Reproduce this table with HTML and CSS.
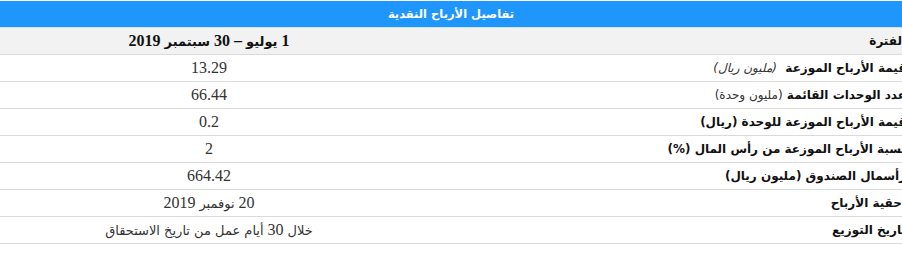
FILE: index.html
```html
<!DOCTYPE html>
<html lang="ar" dir="rtl">
<head>
<meta charset="utf-8">
<link rel="stylesheet" href="styles.css">
</head>
<body>
<div class="panel">
  <div class="title">تفاصيل الأرباح النقدية</div>
  <div class="clip">
    <table class="grid">
      <tr class="head">
        <th class="label">الفترة</th>
        <th class="value">1 <span class="ar">يوليو</span> – 30 <span class="ar">سبتمبر</span> 2019</th>
      </tr>
      <tr>
        <td class="label">قيمة الأرباح الموزعة&nbsp; <span class="unit-it">(مليون ريال)</span></td>
        <td class="value">13.29</td>
      </tr>
      <tr>
        <td class="label">عدد الوحدات القائمة <span class="unit">(مليون وحدة)</span></td>
        <td class="value">66.44</td>
      </tr>
      <tr>
        <td class="label">قيمة الأرباح الموزعة للوحدة (ريال)</td>
        <td class="value">0.2</td>
      </tr>
      <tr>
        <td class="label">نسبة الأرباح الموزعة من رأس المال (%)</td>
        <td class="value">2</td>
      </tr>
      <tr>
        <td class="label">رأسمال الصندوق (مليون ريال)</td>
        <td class="value">664.42</td>
      </tr>
      <tr>
        <td class="label">أحقية الأرباح</td>
        <td class="value">20 <span class="ar">نوفمبر</span> 2019</td>
      </tr>
      <tr>
        <td class="label">تاريخ التوزيع</td>
        <td class="value"><span class="ar">خلال</span> 30 <span class="ar">أيام عمل من تاريخ الاستحقاق</span></td>
      </tr>
    </table>
  </div>
</div>
</body>
</html>
```

FILE: styles.css
```css
html, body {
  margin: 0;
  padding: 0;
  background: #ffffff;
}
body {
  padding-top: 1px;
  font-family: "DejaVu Sans", sans-serif;
}
.panel {
  width: 100%;
}
.title {
  background: #1e96fc;
  color: #ffffff;
  font-family: "DejaVu Sans", sans-serif;
  font-weight: bold;
  font-size: 11.5px;
  height: 26px;
  line-height: 26px;
  text-align: center;
  border-bottom: 1px solid #cfe6fb;
}
.clip {
  overflow: hidden;
}
.grid {
  border-collapse: collapse;
  width: calc(100% + 4px);
  margin-right: -4px;
  table-layout: fixed;
}
.grid td, .grid th {
  height: 26px;
  padding: 0;
  border-bottom: 1px solid #dadada;
  vertical-align: middle;
  white-space: nowrap;
}
.grid .label {
  text-align: right;
  font-family: "DejaVu Sans", sans-serif;
  font-weight: bold;
  font-size: 12px;
  color: #111111;
}
.grid .value {
  width: 418px;
  text-align: center;
  font-family: "Liberation Serif", "DejaVu Serif", serif;
  font-weight: normal;
  font-size: 16px;
  color: #333333;
}
.grid .value .ar {
  font-family: "DejaVu Sans", sans-serif;
  font-size: 13px;
}
.head td, .head th {
  background: #f2f2f2;
}
.head .value {
  font-weight: bold;
  color: #111111;
}
.unit {
  font-weight: normal;
  color: #333333;
}
.unit-it {
  font-weight: normal;
  font-style: italic;
  color: #333333;
}
```
